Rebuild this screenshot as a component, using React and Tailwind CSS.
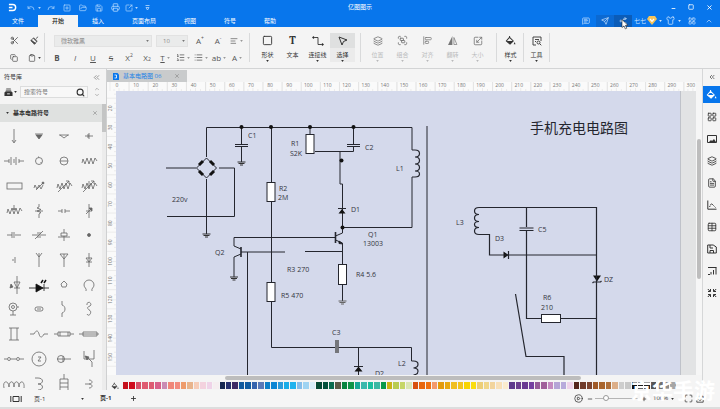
import React from 'react';
import {
    Undo, Redo, SquarePlus, FolderOpen, Save, Printer, SquareArrowOutUpRight, MessageSquareText, Send, Share2, Shirt,
    LayoutGrid, ChevronUp, ChevronDown, ChevronsLeft, Minus, Plus, Square, X, Scissors, Copy, Clipboard,
    Layers, Group, AlignStartVertical, Scaling, Search, FileText, Table,
    CirclePlay, Maximize, TextAlignStart, List, ListOrdered,
} from 'lucide-react';

const tabs = ['文件', '开始', '插入', '页面布局', '视图', '符号', '帮助'];

const palette = [
    '#c5101c', '#cf0a1c', '#d94f68', '#df5a70', '#dd5a72', '#d8608a', '#c98cb4', '#f0877a', '#f28c80', '#ee9c6c',
    '#e8b48c', '#f6cdb8', '#f3d2de', '#efd3e8', '#f5eef0', '#16264f', '#26306f', '#3d2a66', '#115a9e', '#105ca2',
    '#3563ad', '#5878b8', '#0c7fc9', '#0c86d4', '#2a9bdc', '#19ace8', '#20b2ee', '#86bdea', '#9fd3f2', '#d8edf8',
    '#054a35', '#04523c', '#0a6b4e', '#5c5a46', '#08843f', '#0f9447', '#17a797', '#3bb8ac', '#1abf9f', '#3ab8a4',
    '#08994a', '#c9b414', '#b9cc50', '#c6d667', '#dbe6b4', '#d8500e', '#e8650c', '#f07010', '#f3996c', '#e39a0c',
    '#e8a810', '#f0bf20', '#f2c41e', '#f8d400', '#fadd10', '#ecce78', '#f0d68a', '#f2d49c', '#f8e0b8', '#fbeccf',
    '#5f3a8c', '#6d3f90', '#6a3a92', '#7440a0', '#955c98', '#a0609a', '#c48ac0', '#b5a4d6', '#b8aadb', '#efd3ea',
    '#55261c', '#6f3a2a', '#7c4430', '#a05a28', '#a8642c', '#b0703a', '#dcae88', '#cdcdcd', '#c8c8c8',
    '#111111', '#1c1c1c', '#262626', '#555555', '#707070', '#8a8a8a', '#a6a6a6', '#f4f4f4', '#f4f4f4', '#f4f4f4', '#f4f4f4',
];

const Caret = ({ className = '' }) => (
    <svg viewBox="0 0 4 3" className={`h-[2px] w-[3px] shrink-0 ${className}`} fill="currentColor" aria-hidden="true">
        <path d="M0 0h4L2 3z" />
    </svg>
);

const Bucket = ({ className = 'size-[11px]' }) => (
    <svg viewBox="0 0 12 12" className={`shrink-0 ${className}`} fill="none" stroke="currentColor" aria-hidden="true">
        <path d="M5 1v2M5 2.500l4 4-3.500 3.500-4-3.500z" strokeWidth="1.100" />
        <path d="M1.500 6.500H9L5.500 10z" fill="currentColor" stroke="none" />
        <path d="M10.500 7.500l1 2.500h-2z" fill="currentColor" stroke="none" />
    </svg>
);

const Divider = () => <div className="my-[6px] w-px shrink-0 bg-[#d9dadb]" />;

const IconButton = ({ label, className = 'w-4', children }) => (
    <button aria-label={label} className={`flex h-3 shrink-0 items-center justify-center ${className}`}>
        {children}
    </button>
);

const TitleBar = () => (
    <div className="relative flex h-[14px] items-center pl-2 text-white">
        <svg viewBox="0 0 10 9" className="mr-2 h-[9px] w-[9px]" fill="none" stroke="white" strokeWidth="1.6" aria-hidden="true">
            <path d="M1 1.2h4.2a3.2 3.2 0 0 1 0 6.6H1M1 4.5h4" />
        </svg>
        <div className="flex items-center pt-px text-[#b9dcff]">
            <IconButton label="撤销" className="w-[18px]">
                <Undo size={8} /><Caret className="ml-[3px]" />
            </IconButton>
            <IconButton label="重做"><Redo size={8} /></IconButton>
            <IconButton label="新建"><SquarePlus size={8} /></IconButton>
            <IconButton label="打开"><FolderOpen size={8} /></IconButton>
            <IconButton label="保存"><Save size={8} /></IconButton>
            <IconButton label="打印"><Printer size={9} /></IconButton>
            <IconButton label="导出"><SquareArrowOutUpRight size={8} /><Caret className="ml-[2px]" /></IconButton>
            <IconButton label="自定义">
                <svg viewBox="0 0 5 6" className="h-[6px] w-[5px]" fill="none" stroke="currentColor" strokeWidth=".8"><path d="M.5.5h4M1 2.5h3L2.5 5z" /></svg>
            </IconButton>
        </div>
        <h1 className="absolute left-1/2 -translate-x-1/2 text-[6px] leading-[14px]">亿图图示</h1>
        <div className="ml-auto flex pr-[2px]">
            <IconButton label="最小化" className="w-[18px]"><Minus size={5} strokeWidth={4} className="mt-[3px]" /></IconButton>
            <IconButton label="最大化" className="w-[18px]"><Square size={6} strokeWidth={3} /></IconButton>
            <IconButton label="关闭" className="w-[18px]"><X size={7} strokeWidth={3} /></IconButton>
        </div>
    </div>
);

const MenuBar = () => (
    <div className="relative flex h-[13px] items-stretch text-white">
        <nav className="flex items-stretch pt-px">
            {tabs.map((t) => (
                <button
                    key={t}
                    className={`px-[14px] text-[6px] leading-[12px] first:pl-3 ${t === '开始' ? 'bg-[#f4f4f4] font-medium text-[#222]' : ''}`}
                >
                    {t}
                </button>
            ))}
        </nav>
        <div className="ml-auto flex items-center pr-[2px] text-[#cfe6ff]">
            <IconButton label="评论" className="mr-[2px] w-4"><MessageSquareText size={8} /></IconButton>
            <IconButton label="发送" className="w-[18px] bg-[#0b69d2]"><Send size={8} /></IconButton>
            <IconButton label="分享" className="w-[18px] bg-[#0b5cb8]"><Share2 size={8} /></IconButton>
            <button className="flex items-center pl-[2px] text-[6px] leading-[12px]">
                七七
                <svg viewBox="0 0 10 9" className="ml-px h-[9px] w-[10px]" aria-hidden="true">
                    <path d="M2 0h6l2 3-5 6-5-6z" fill="#f6c45a" />
                    <path d="M3 3l2 2.400L7 3" fill="none" stroke="#fff" strokeWidth="1.2" />
                </svg>
                <Caret className="ml-[2px]" />
            </button>
            <IconButton label="主题" className="w-[22px]"><Shirt size={9} /><Caret className="ml-[3px]" /></IconButton>
            <IconButton label="应用" className="w-4"><LayoutGrid size={8} /></IconButton>
            <IconButton label="收起" className="w-[18px]"><ChevronUp size={8} /></IconButton>
        </div>
        <svg viewBox="0 0 8 11" className="absolute right-[91px] top-[5px] z-10 h-[11px] w-2" aria-hidden="true">
            <path d="M1 .5v8l2-1.6 1.3 3 1.5-.7-1.4-2.8H7z" fill="#fff" stroke="#222" strokeWidth=".6" />
        </svg>
    </div>
);

const FontBox = ({ id, label, value, width }) => (
    <div className={`relative ${width}`}>
        <label htmlFor={id} className="sr-only">{label}</label>
        <select id={id} className="block h-3 w-full appearance-none border border-[#e2e2e2] bg-[#eaebeb] pl-[6px] text-[6px] leading-[10px] text-[#8a8a8a]">
            <option>{value}</option>
        </select>
        <Caret className="absolute right-[3px] top-[5px] text-[#777]" />
    </div>
);

const Format = ({ label, caret, children }) => (
    <button aria-label={label} className="flex h-3 w-[18px] shrink-0 items-center justify-center text-[8px] leading-3 text-[#555]">
        {children}
        {caret && <Caret className="ml-[2px] text-[#999]" />}
    </button>
);

const Tool = ({ label, active, muted, caret = true, children }) => (
    <button
        className={`my-[6px] flex w-[25px] shrink-0 flex-col items-center text-[6px] leading-[8px] ${active ? 'bg-[#ebebeb]' : ''} ${muted ? 'text-[#b9babb]' : 'text-[#333]'}`}
    >
        <span className={`mb-[3px] flex h-[15px] w-full items-center justify-center ${active ? 'bg-[#dfe0e0]' : ''} ${muted ? 'text-[#777]' : 'text-[#333]'}`}>
            {children}
        </span>
        <span className="whitespace-nowrap">{label}</span>
        {caret && <Caret className="mt-px" />}
    </button>
);

const Ribbon = () => (
    <div className="flex h-[42px] shrink-0 border-b border-[#d3d4d5] bg-[#f4f4f4] text-[#444]">
        <div className="grid w-11 shrink-0 grid-cols-2 content-center justify-items-center gap-y-[5px] pl-1 pt-[3px]">
            <IconButton label="剪切"><Scissors size={9} /></IconButton>
            <IconButton label="格式刷">
                <svg viewBox="0 0 10 10" className="size-[9px]" fill="none" stroke="currentColor" strokeWidth=".9"><path d="M9 .8L6.500 3M3.500 2.500l4 4M4 2L1 5l4 4 3-3.500z" /><path d="M2 5l4 3-1 1-4-4z" fill="currentColor" /></svg>
            </IconButton>
            <IconButton label="复制"><Copy size={8} /></IconButton>
            <IconButton label="粘贴"><Clipboard size={8} /><Caret className="ml-[2px]" /></IconButton>
        </div>
        <Divider />
        <div className="flex w-[204px] shrink-0 flex-col justify-center gap-[5px] overflow-hidden pl-[3px] pt-[3px]">
            <div className="flex items-center pl-[6px]">
                <FontBox id="font" label="字体" value="微软雅黑" width="w-[98px]" />
                <div className="w-1" />
                <FontBox id="size" label="字号" value="10" width="w-8" />
                <div className="w-[3px]" />
                <Format label="增大字号">A<sup className="text-[5px]">+</sup></Format>
                <Format label="减小字号">A<sup className="text-[5px]">-</sup></Format>
                <Format label="对齐方式" caret><TextAlignStart size={8} /></Format>
            </div>
            <div className="flex items-center">
                <Format label="粗体"><b>B</b></Format>
                <Format label="斜体"><i>I</i></Format>
                <Format label="下划线"><u>U</u></Format>
                <Format label="删除线"><s>S</s></Format>
                <Format label="上标">X<sup className="text-[5px]">2</sup></Format>
                <Format label="下标">X<sub className="text-[5px]">2</sub></Format>
                <Format label="文字方向" caret><span className="underline">T</span></Format>
                <Format label="行距" caret><ListOrdered size={9} /></Format>
                <Format label="列表" caret><List size={9} /></Format>
                <Format label="字符间距" caret>ab</Format>
                <Format label="字体颜色" caret>A</Format>
            </div>
        </div>
        <Divider />
        <div className="flex shrink-0 px-[5px]">
            <Tool label="形状"><Square size={11} /></Tool>
            <Tool label="文本" caret={false}><span className="font-serif text-[11px] font-bold leading-[15px]">T</span></Tool>
            <Tool label="连接线">
                <svg viewBox="0 0 12 10" className="h-[10px] w-3" fill="none" stroke="currentColor" strokeWidth=".9">
                    <path d="M2.5 1.5H6v7h3.5" /><circle cx="1.5" cy="1.5" r=".8" fill="currentColor" /><circle cx="10.5" cy="8.5" r=".8" fill="currentColor" />
                </svg>
            </Tool>
            <Tool label="选择" active>
                <svg viewBox="0 0 10 10" className="h-[10px] w-[10px]" fill="none" stroke="currentColor"><path d="M1 1l8 3-3.500 1.500L4 9z" /></svg>
            </Tool>
        </div>
        <Divider />
        <div className="flex shrink-0 pl-1 pr-[6px]">
            <Tool label="位置" muted><Layers size={10} /></Tool>
            <Tool label="组合" muted><Group size={11} /></Tool>
            <Tool label="对齐" muted><AlignStartVertical size={9} /></Tool>
            <Tool label="翻转" muted>
                <svg viewBox="0 0 10 9" className="h-[9px] w-[10px]" fill="currentColor"><path d="M4.400 0v9H0z" /><path d="M5.900 1.500v7h3z" fill="none" stroke="currentColor" strokeWidth=".7" /></svg>
            </Tool>
            <Tool label="大小" muted><Scaling size={10} /></Tool>
        </div>
        <Divider />
        <div className="pl-px"><Tool label="样式"><Bucket /></Tool></div>
        <Divider />
        <Tool label="工具">
            <svg viewBox="0 0 10 10" className="size-[10px]" fill="none" stroke="currentColor" strokeWidth=".9"><path d="M4 9H1V1h8v4M3 3.500h4M3 5.500h1" /><circle cx="6.500" cy="6.500" r="1.500" /><path d="M7.700 7.700L9.300 9.300" /></svg>
        </Tool>
        <Divider />
    </div>
);

const zig = 'M-7 2l1-4 2 5 2-6 2 6 2-6 2 6 2-6 2 3';
const arrow = 'M-6 6L5-5M2-5h3v3';

// one drawing per library cell, centred on 0,0
const symbols = [
    <path d="M0-7V6M-2 4l2 3 2-3" />,
    <path d="M-4-2h8M-3-1h6L0 3zM-2 0h4" fill="currentColor" />,
    <path d="M-5-1h10M-4-1l4 3 4-3" />,
    <path d="M-4 0h8M0-3v6M-1-2v4" />,
    <path d="M-10 0h5M-5-2v4M-3-4v8M0-2v4M2-4v8M5-2v4M5 0h5" />,
    <><circle r="3.5" /><path d="M-1-4h1M2 1v1" /></>,
    <><circle r="4" /><path d="M-4 0h8" /></>,
    <path d={zig} />,
    <rect x="-7" y="-3" width="15" height="6" />,
    <><path d="M-5 2l1-3 2 4 2-4 2 4 2-4" /><path d="M-3 4l7-7" /><circle cx="4" cy="-3" r="1" fill="currentColor" /></>,
    <><path d={zig} /><path d={arrow} /></>,
    <><path d={zig} /><path d={arrow} /><path d="M0-5v6" /></>,
    <><path d={zig} /><path d="M0-6v5M-1-3l1 2 1-2" /></>,
    <path d="M0-7v3l-2 1 4 1.500-4 1.500 4 1.500L0 3v4M-4 0h8" />,
    <path d="M-6 0h4M-2-2v4M1-2v4M1 0h5" />,
    <><path d="M0-7V7M-3 0h6M-3 3l6-6" /><path d="M0-3h3v3z" fill="currentColor" /></>,
    <path d="M-7 0h5M-2-3v6M0-3v6M1 0h6" />,
    <path d="M-7 0h5M-1-3v6M1-3v6M2 0h5M-4 4l8-8" />,
    <path d="M0-6v4M-3-2h6v3h-6zM-6 2H6M0 1v5" />,
    <circle r="1.500" fill="currentColor" />,
    <path d="M-2 0h2M1-3v6" />,
    <path d="M0-7V7M-3-7l3 4 3-4" />,
    <path d="M0-6V7M-4-6h8L0-1z" />,
    <path d="M0-7V7M-3-2h6L0 2zM-3 2h6" />,
    <><path d="M3-9V9M0-3h6L3 3zM0 3h6" /><path d="M-3-1l2 3-3 1z" fill="currentColor" /></>,
    <g stroke="#111"><path d="M-10 3H10M5-1v7" /><path d="M-3-1l7 4-7 4z" fill="#111" /><path d="M2-2l2-3M5-2l2-3" strokeWidth="1.500" /></g>,
    <path d="M-3-1l3-3 3 3-1 3h-4z" />,
    <path d="M-3 6c1-3-2-3-2-6a5 5 0 0 1 10 0c0 3-3 3-2 6" />,
    <><circle cx="-1" cy="-2" r="4" /><circle cx="-1" cy="-2" r="1.500" /><path d="M-1 2v4M-4 6h6M3-2h2" /></>,
    <><rect x="-4" y="-2" width="8" height="4" rx="2" /><path d="M-2 0h4" /></>,
    <path d="M-2-8v4c4 1 4 7 0 8v4" />,
    <path d="M-2-4a2 2 0 1 1 3 1c-5 2-1 3-1 4 4 1 0 8-2 4" />,
    <path d="M-5-6H5M-3-6V6M3-6V6M-5 6H5" />,
    <path d="M-9 0h4c2-4 4-4 5 0s3 4 5 0h4" />,
    <path d="M-10 0h4M-6-2H6v4H-6zM6 0h4M-4-2v4M4-2v4" />,
    <path d="M-10 0h20M-6-2H8v4H-6z" />,
    <><path d="M-10 0h3M-3 0h5M6 0h4" /><circle cx="-5" r="1.500" /><circle cx="4" r="1.500" /></>,
    <><circle r="7" /><path d="M-1-2h3l-3 4h3" /></>,
    <><circle cx="-3" r="3.500" /><path d="M-7 0H7M-1-3v6" /></>,
    <><path d="M-5-8v8H5v-9M3 8V3L-3-3" /><path d="M-4-3l4 1-2 3z" fill="currentColor" /></>,
    <path d="M-10 4c-2-8 5-8 5-1 0-7 5-7 5 0 0-7 5-7 5 0 0-7 6-7 5 1" />,
    <path d="M-4-6h3c6 0 6 6 0 6 6 0 6 6 0 6" />,
    <path d="M0-10v5M-4-5h8M-4-1h8M-4 3h8M-4-5v12M4-5v12" />,
    <path d="M-4 0h4M0-4c4 0 4 4 0 4 4 0 4 4 0 4" />,
];

const Library = () => (
    <aside className="flex w-[107px] shrink-0 flex-col overflow-hidden border-r border-[#cfd0d1] bg-[#f4f4f4] text-[#333]">
        <div className="flex h-4 shrink-0 items-center justify-between pl-1 pr-[5px] text-[6px]">
            <h2>符号库</h2>
            <ChevronsLeft size={9} className="text-[#777]" />
        </div>
        <div className="flex h-[14px] shrink-0 items-center">
            <IconButton label="符号" className="w-5">
                <svg viewBox="0 0 10 10" className="size-[9px]" fill="none" stroke="currentColor"><path d="M2 2.500h6M2.500 1h5" strokeWidth=".8" /><path d="M.5 5L2 3.500h6L9.500 5v4h-9z" fill="currentColor" stroke="none" /><path d="M3.500 6.500h3" stroke="#f4f4f4" /></svg>
                <Caret className="ml-px" />
            </IconButton>
            <div className="flex h-3 flex-1 items-center border border-[#dcdddd] bg-[#f8f8f8] pr-[2px]">
                <input aria-label="搜索符号" placeholder="搜索符号" className="w-full min-w-0 bg-transparent pl-[3px] text-[6px] leading-[10px] outline-none placeholder:text-[#777]" />
                <Search size={9} strokeWidth={3} className="shrink-0" />
            </div>
            <div className="flex w-[18px] flex-col items-center text-[#777]">
                <ChevronUp size={6} /><ChevronDown size={6} />
            </div>
        </div>
        <div className="mt-[5px] flex min-h-0 flex-1">
            <div className="min-w-0 flex-1 overflow-hidden">
                <div className="flex h-[18px] items-center bg-[#dfe1e0] pl-[6px] pr-1 text-[6px] font-bold">
                    <Caret className="mr-1" />基本电路符号<X size={6} className="ml-auto text-[#777]" />
                </div>
                <div className="mt-[2px] grid h-[272px] grid-cols-4 grid-rows-11 pl-px text-[#666]">
                    {symbols.map((s, i) => (
                        <div key={i} className="flex min-h-0 items-center justify-center">
                            <svg viewBox="-12 -12 24 24" className="h-6 w-6 shrink-0" fill="none" stroke="currentColor" strokeWidth=".8">{s}</svg>
                        </div>
                    ))}
                </div>
            </div>
            <div className="w-1 shrink-0 bg-[#ececec]"><div className="h-7 bg-[#c4c5c5]" /></div>
        </div>
    </aside>
);

const xMarks = Array.from({ length: 31 }, (_, i) => i * 10);
const yMarks = Array.from({ length: 15 }, (_, i) => 10 + i * 10);

const RulerX = () => (
    <svg className="h-[9px] w-full shrink-0 bg-[#fafafa]" aria-hidden="true">
        {xMarks.map((n) => {
            const x = 10 + n * 1.913;
            return (
                <g key={n}>
                    <path d={`M${x - 7} 0v9M${x + 12} 0v9M${x + 2} 6v3M${x - 3} 7v2M${x + 7} 7v2`} stroke="#dcdcdc" strokeWidth=".5" />
                    <text x={x} y="5" fontSize="5" textAnchor="middle" fill="#777">{n}</text>
                </g>
            );
        })}
    </svg>
);

const RulerY = () => (
    <svg className="h-full w-[9px] shrink-0 bg-[#fafafa]" aria-hidden="true">
        {yMarks.map((n) => {
            const y = n * 1.915 - 21;
            return (
                <g key={n}>
                    <path d={`M0 ${y + 9}h9M6 ${y}h3M7 ${y + 5}h2M7 ${y - 5}h2`} stroke="#dcdcdc" strokeWidth=".5" />
                    {n > 10 && <text transform={`translate(5 ${y}) rotate(-90)`} fontSize="5" textAnchor="middle" fill="#777">{n}</text>}
                </g>
            );
        })}
    </svg>
);

const notes = [
    ['220v', 172, 202], ['C1', 248, 138], ['R1', 291, 146], ['S2K', 290, 156], ['C2', 365, 150], ['L1', 396, 171],
    ['R2', 279, 191], ['2M', 278, 200], ['D1', 351, 212], ['Q1', 368, 237], ['13003', 363, 246], ['Q2', 215, 255],
    ['R3 270', 287, 272], ['R4 5.6', 356, 277], ['R5 470', 281, 298], ['C3', 332, 335], ['D2', 375, 376], ['L2', 398, 366],
    ['L3', 456, 225], ['D3', 495, 241], ['C5', 538, 232], ['DZ', 604, 282], ['R6', 543, 300], ['210', 541, 310],
];

const Ground = ({ x, y, light }) => (
    <path d={`M${x - 4} ${y}h8M${x - 3} ${y + 1.5}h6M${x - 1.5} ${y + 3}h3`} stroke={light ? '#666' : '#333'} />
);

const Circuit = () => (
    <svg viewBox="116 91 564 284" className="h-[284px] w-[564px]" fill="none" stroke="#24262e" strokeWidth="1">
        <path d="M206.500 157V127.500H412V150M166 168H196M219 168H234.500V216.500H167M206.500 179V234" />
        <path d="M241.500 127.500V144M235 144.500h13M235 146.500h13M241.500 147V162" />
        <path d="M271.500 127.500V182M271.500 202V282M271.500 301V347.500H335M338.500 347.500H411.500V361" />
        <path d="M336 340v13M338 340v13" strokeWidth="1.500" stroke="#555" />
        <path d="M310 127V134M315 151.500H353.500V147M353.500 127.500V144M347 144.500h13M347 146.500h13" />
        <path d="M340 151.500V184H342.500V228M342 227.500H412V177M427 126V375" />
        <path d="M335 237.500H234V246l7 3M241 254l-7 3V277M241 252H285M305 251.500H342M247.500 252V375" />
        <path d="M342.500 227V233l-7 3M335.500 240l7 3V264M342.500 285V301M358.500 347.500V375" />
        <path d="M335.500 232v11M241 247v10" strokeWidth="1.600" />
        <path d="M412 150h3c6 0 6 7 0 7 6 0 6 7 0 7 6 0 6 7 0 7 6 0 6 6 0 6h-3" strokeWidth="1.200" />
        <path d="M411.500 361h2c6 0 6 6 0 7 6 0 6 6 0 7" strokeWidth="1.200" />
        <path d="M206.500 158l10 10-10 10-10-10z" />
        <path d="M199 165l4-4M210 161l4 4M199 171l4 4M210 175l4-4" strokeWidth="3" stroke="#111" />
        <path d="M338 208.500h8M354 366.500h9" />
        <path d="M338.500 213.500h7l-3.500-4.500zM354.500 371.500h8l-4-5z" fill="#111" stroke="none" />
        <path d="M339 241l4 3-4-.500z" fill="#111" />
        <g fill="#fff">
            <rect x="306" y="134.500" width="8" height="19" />
            <rect x="267" y="182.500" width="8" height="19" />
            <rect x="267" y="282.500" width="8" height="19" />
            <rect x="338.500" y="264.500" width="8" height="20" />
            <rect x="541.500" y="314.500" width="19" height="8" />
        </g>
        <Ground x={241.5} y={162} />
        <Ground x={206.5} y={234} />
        <Ground x={234} y={277} />
        <Ground x={342.5} y={301} light />
        <g fill="#111" stroke="none">
            <circle cx="241.500" cy="127" r="2" /><circle cx="271" cy="127" r="2" /><circle cx="310" cy="127" r="2" />
            <circle cx="353.500" cy="127" r="2" /><circle cx="341.500" cy="160.500" r="2" /><circle cx="342.500" cy="227.500" r="2" />
            <path d="M503.500 251.500v7l5-3.500zM593 275.500h8l-4 6z" />
        </g>
        <path d="M479 207.500H596.500V375M479 234.500H489.500V255H596.500" strokeWidth="1.200" />
        <path d="M479 207.500c-6 0-6 7 0 7-6 0-6 7 0 7-6 0-6 6 0 6-6 0-6 7 0 7" strokeWidth="1.200" />
        <path d="M526.500 207.500V227M519.500 228h14M519.500 230.500h14M526.500 231V318.500H541M561 318.500H596.500" strokeWidth="1.200" />
        <path d="M508.500 251v8M592.500 283l1-1h7l1-1M515.500 294L526 356.500H564V375" strokeWidth="1.200" />
        <g fill="#33353d" stroke="none" fontSize="7" className="font-['Open_Sans',sans-serif]">
            {notes.map(([t, x, y]) => <text key={t} x={x} y={y}>{t}</text>)}
        </g>
        <text x="530" y="133" fontSize="14" fill="#24262e" stroke="none">手机充电电路图</text>
    </svg>
);

const Canvas = () => (
    <main className="flex min-w-0 flex-1 flex-col bg-[#f4f4f4]">
        <div className="flex h-[13px] shrink-0 items-end">
            <div className="flex h-3 w-20 items-center bg-[#c9cbcc] pl-[6px] pr-[7px] text-[6px] text-[#1c82e6]">
                <svg viewBox="0 0 6 7" className="mr-1 h-[7px] w-[6px]" aria-hidden="true">
                    <path d="M0 0h4.500L6 1.500V7H0z" fill="#0876ec" /><path d="M1.500 2h2v3h-2" fill="none" stroke="#fff" strokeWidth=".8" />
                </svg>
                基本电路图 06
                <X size={6} className="ml-auto text-[#777]" />
            </div>
        </div>
        <div className="flex min-h-0 flex-1">
            <div className="flex min-w-0 flex-1 flex-col">
                <RulerX />
                <div className="flex min-h-0 flex-1">
                    <RulerY />
                    <div className="min-w-0 flex-1 overflow-hidden bg-[#e2e3e4]">
                        <div className="h-full w-[565px] overflow-hidden border-r border-[#bfc2c9] bg-[#d4d9eb]"><Circuit /></div>
                    </div>
                </div>
            </div>
            <div className="w-[6px] shrink-0 bg-[#f6f6f6] px-px pt-[57px]"><div className="h-[140px] rounded-sm bg-[#bdbdbd]" /></div>
        </div>
        <div className="h-[6px] shrink-0 pl-[118px] pt-px"><div className="h-1 w-[356px] rounded-sm bg-[#bdbdbd]" /></div>
        <div className="flex h-[9px] shrink-0 items-center">
            <div className="flex w-4 justify-center text-[#333]"><Bucket className="size-2" /></div>
            <div className="flex h-[7px] flex-1">
                {palette.map((c, i) => (
                    <div key={i} className="flex-1 border-r border-[#f4f4f4]" style={{ backgroundColor: c }} />
                ))}
            </div>
        </div>
    </main>
);

const RailIcon = ({ children }) => (
    <svg viewBox="0 0 10 10" className="size-[10px]" fill="none" stroke="currentColor" aria-hidden="true">{children}</svg>
);

const railIcons = [
    ['符号', <LayoutGrid size={10} />],
    ['图片', <RailIcon><path d="M.5 1.500h9v7h-9z" /><path d="M2 8l2-2 1 1 2-2 2 3z" fill="currentColor" stroke="none" /></RailIcon>],
    ['图层', <Layers size={10} />],
    ['页面', <FileText size={10} />],
    ['图表', <RailIcon><path d="M.8.5v8.700H9.500" /><path d="M2.500 7L4.500 3.500 6.500 5.500 8.500 7.500" strokeDasharray="1.500 .7" /></RailIcon>],
    ['表格', <Table size={10} />],
    ['资源', <RailIcon><path d="M.7 1h5.500L9.300 3v6H.7zM3 1v3h3M3 9V6.500h3.500V9" /></RailIcon>],
    ['统计', <RailIcon><path d="M1 1.500h8.500M9 1.500v7M6.500 4v4.500M4 6v2.500M1 8.500h2" /></RailIcon>],
    ['缩放', <RailIcon><path d="M.8 1l2.500 2.500M9.200 1L6.700 3.500M.8 9l2.500-2.500M9.200 9L6.700 6.500M1 3.500h2.500V1M9 3.500H6.500V1M1 6.500h2.500V9M9 6.500H6.500V9" /></RailIcon>],
];

const Rail = () => (
    <aside className="flex w-[18px] shrink-0 flex-col items-center border-l border-[#d6d7d8] bg-[#f4f4f4] text-[#333]">
        <IconButton label="展开" className="mt-[2px] w-4"><ChevronsLeft size={8} /></IconButton>
        <button aria-label="填充" className="mb-[3px] mt-[3px] flex h-[17px] w-full shrink-0 items-center justify-center bg-[#0876ec] text-white"><Bucket /></button>
        {railIcons.map(([label, icon]) => (
            <button key={label} aria-label={label} className="flex h-[22px] w-full shrink-0 items-center justify-center">{icon}</button>
        ))}
    </aside>
);

const StatusBar = () => (
    <footer className="flex h-[19px] shrink-0 items-center border-b-2 border-[#dcdddd] bg-[#f5f5f5] text-[6px] text-[#333]">
        <IconButton label="页面视图" className="w-8">
            <svg viewBox="0 0 12 8" className="h-2 w-3" fill="none" stroke="currentColor"><path d="M3 1.500h6v5H3zM.8 1v6M11.200 1v6" /></svg>
        </IconButton>
        <label htmlFor="page" className="sr-only">页面</label>
        <div className="relative mr-[13px] w-[55px]">
            <select id="page" className="block w-full appearance-none bg-transparent pl-[2px] text-[6px] leading-[10px]"><option>页-1</option></select>
            <Caret className="absolute right-[3px] top-1" />
        </div>
        <button className="font-bold">页-1</button>
        <IconButton label="新建页" className="ml-[14px] w-4"><Plus size={7} strokeWidth={3} /></IconButton>
        <div className="ml-auto flex items-center pr-[14px]">
            <IconButton label="播放" className="w-[14px]"><CirclePlay size={9} /></IconButton>
            <IconButton label="缩小" className="w-[10px]"><Minus size={6} strokeWidth={3} /></IconButton>
            <input
                type="range" aria-label="缩放" defaultValue="22"
                className="h-[6px] w-[43px] appearance-none bg-transparent [&::-webkit-slider-runnable-track]:h-px [&::-webkit-slider-runnable-track]:bg-[#b5b5b5] [&::-webkit-slider-thumb]:-mt-[3px] [&::-webkit-slider-thumb]:size-[6px] [&::-webkit-slider-thumb]:appearance-none [&::-webkit-slider-thumb]:rounded-full [&::-webkit-slider-thumb]:border [&::-webkit-slider-thumb]:border-[#999] [&::-webkit-slider-thumb]:bg-white"
            />
            <IconButton label="放大" className="w-3"><Plus size={6} strokeWidth={3} /></IconButton>
            <button className="flex w-8 items-center gap-[3px] pl-[3px]">100%<Caret /></button>
            <IconButton label="全屏" className="w-3"><Maximize size={9} /></IconButton>
            <IconButton label="适应" className="w-3">
                <svg viewBox="0 0 10 10" className="size-2" fill="none" stroke="currentColor"><path d="M3 1.500H1v7.500h8V1.500H7M5 1v6M3.500 5.500L5 7l1.500-1.500" /></svg>
            </IconButton>
        </div>
    </footer>
);

const App = () => (
    <div className="relative flex h-screen flex-col overflow-hidden bg-[#f4f4f4] font-['Open_Sans','Noto_Sans_CJK_SC',sans-serif]">
        <header className="shrink-0 bg-[#0876ec]">
            <TitleBar />
            <MenuBar />
        </header>
        <Ribbon />
        <div className="flex min-h-0 flex-1">
            <Library />
            <Canvas />
            <Rail />
        </div>
        <StatusBar />
        <div className="pointer-events-none absolute bottom-1 right-[5px] text-[21px] font-bold leading-[30px] text-white">京华手游</div>
    </div>
);

export default App;
